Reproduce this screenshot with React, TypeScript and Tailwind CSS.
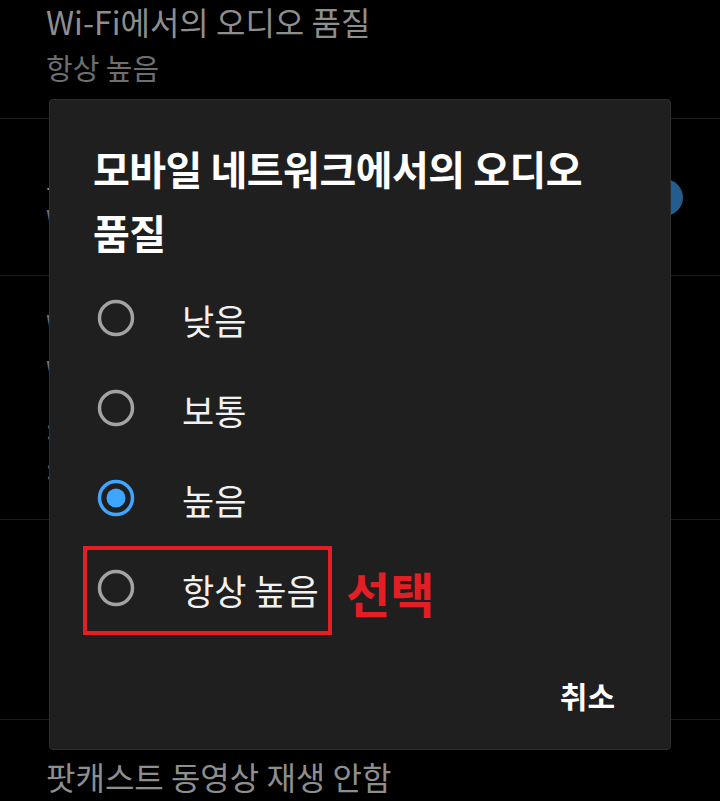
import React from "react";

const font = { fontFamily: '"Noto Sans CJK KR", "Noto Sans", Roboto, sans-serif' };

function Radio({ checked }: { checked?: boolean }) {
  return (
    <svg width="38" height="38" viewBox="0 0 38 38" className="shrink-0">
      {checked ? (
        <>
          <circle cx="19" cy="19" r="16.5" fill="none" stroke="#3ea6ff" strokeWidth="3.5" />
          <circle cx="19" cy="19" r="9.5" fill="#3ea6ff" />
        </>
      ) : (
        <circle cx="19" cy="19" r="16.5" fill="none" stroke="#a3a3a3" strokeWidth="3.5" />
      )}
    </svg>
  );
}

export default function App() {
  const options = [
    { label: "낮음" },
    { label: "보통" },
    { label: "높음", checked: true },
    { label: "항상 높음", marked: true },
  ];
  return (
    <div className="relative w-[720px] h-[801px] bg-black overflow-hidden" style={font}>
      {/* background settings list */}
      <div className="flex flex-col">
        <div className="h-[119px] border-b border-[#1c1c1c] pl-[46px] flex flex-col">
          <div className="text-[32px] leading-[44px] text-[#8e8e8e] -mt-[1px]">Wi-Fi에서의 오디오 품질</div>
          <div className="text-[29px] leading-[40px] text-[#6e6e6e] mt-[4px]">항상 높음</div>
        </div>
        <div className="relative h-[157px] border-b border-[#1c1c1c]">
          <div className="absolute top-[44px] left-[46px] text-[30px] leading-[42px] text-[#8e8e8e]">-</div>
          <div className="absolute top-[80px] left-[46px] text-[28px] leading-[40px] text-[#6e6e6e]">Wi-Fi에서만 사용</div>
          <div className="absolute left-[646px] top-[60px] w-[37px] h-[37px] rounded-full bg-[#245c8e]" />
        </div>
        <div className="relative h-[244px] border-b border-[#1c1c1c]">
          <div className="absolute top-[28px] left-[46px] text-[28px] leading-[40px] text-[#6e6e6e]">Wi-Fi</div>
          <div className="absolute top-[74px] left-[46px] text-[28px] leading-[40px] text-[#6e6e6e]">Wi-Fi</div>
          <div className="absolute top-[132px] left-[46px] text-[28px] leading-[40px] text-[#6e6e6e]">:</div>
          <div className="absolute top-[172px] left-[46px] text-[28px] leading-[40px] text-[#6e6e6e]">:</div>
        </div>
        <div className="relative h-[200px] border-b border-[#1c1c1c]">
          <div className="absolute top-[48px] left-[46px] text-[28px] leading-[40px] text-[#6e6e6e]">·</div>
          <div className="absolute top-[93px] left-[46px] text-[28px] leading-[40px] text-[#6e6e6e]">·</div>
          <div className="absolute top-[143px] left-[46px] text-[28px] leading-[40px] text-[#6e6e6e]">·</div>
        </div>
        <div className="pl-[46px] pt-[34px]">
          <div className="text-[32px] leading-[44px] text-[#8e8e8e]">팟캐스트 동영상 재생 안함</div>
        </div>
      </div>

      {/* dialog */}
      <div className="absolute left-[49px] top-[99px] w-[622px] h-[651px] rounded-[4px] bg-[#1f1f1f] border border-[#2e2e2e] flex flex-col">
        <div className="pl-[43px] pr-[20px] pt-[36px] text-[40px] leading-[64px] font-bold text-white tracking-[-0.5px]">
          모바일 네트워크에서의 오디오
          <br />
          품질
        </div>
        <div className="flex flex-col mt-[9px]">
          {options.map((o) => (
            <div key={o.label} className="relative h-[90px] flex items-center pl-[47px]">
              <Radio checked={o.checked} />
              <span className="ml-[47px] pt-[5px] text-[35px] text-[#f1f1f1]">{o.label}</span>
              {o.marked && (
                <>
                  <div className="absolute left-[33px] top-[3px] w-[249px] h-[89px] border-[4px] border-[#e31e25]" />
                  <div className="absolute left-[296px] top-[21px] text-[48px] leading-[56px] font-bold text-[#e31e25]">선택</div>
                </>
              )}
            </div>
          ))}
        </div>
        <div className="flex justify-end pr-[55px] mt-[40px]">
          <span className="text-[30px] font-bold text-white">취소</span>
        </div>
      </div>
    </div>
  );
}
